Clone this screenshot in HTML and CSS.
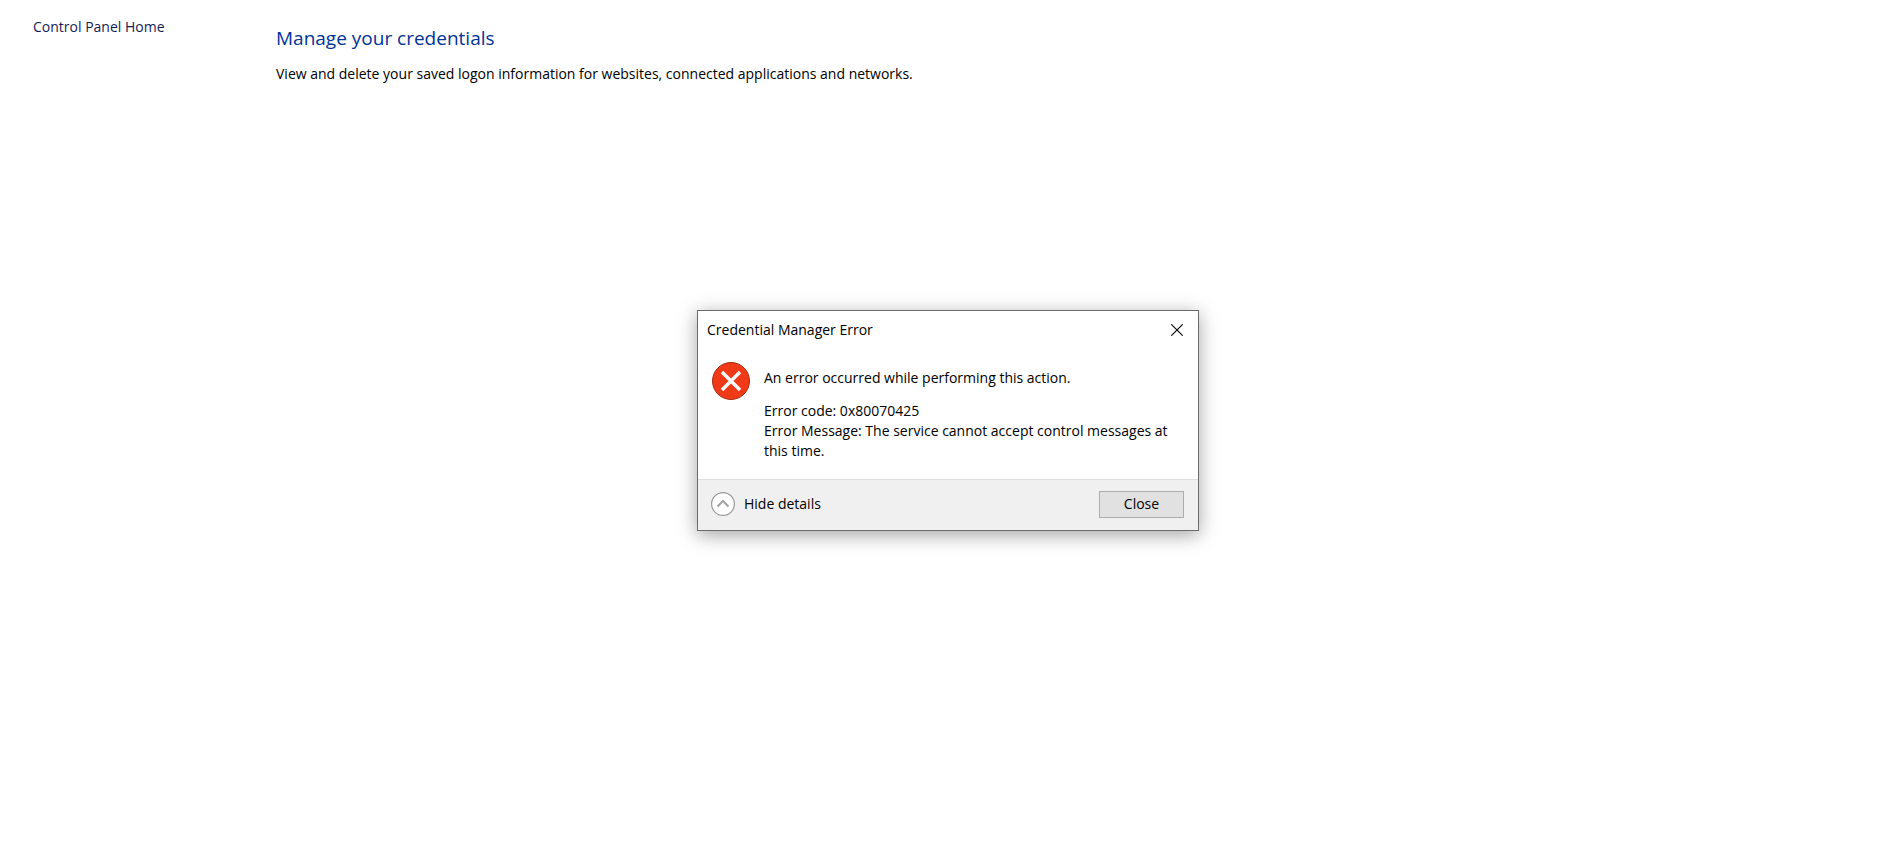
FILE: index.html
```html
<!DOCTYPE html>
<html lang="en">
<head>
<meta charset="utf-8">
<title>Credential Manager</title>
<meta name="viewport" content="width=device-width, initial-scale=1">
<link rel="stylesheet" href="styles.css">
</head>
<body>
<div class="page">
  <nav class="sidebar">
    <a href="#">Control Panel Home</a>
  </nav>
  <main class="content">
    <h1>Manage your credentials</h1>
    <p>View and delete your saved logon information for websites, connected applications and networks.</p>
  </main>
</div>

<div class="dialog" role="alertdialog" aria-labelledby="dialog-title">
  <div class="titlebar">
    <h2 id="dialog-title">Credential Manager Error</h2>
    <button class="x" type="button" aria-label="Close window">
      <svg width="12" height="12" viewBox="0 0 12 12"><path d="M0.3 0.3L11.7 11.7M11.7 0.3L0.3 11.7" stroke="#000" stroke-width="1.1"/></svg>
    </button>
  </div>
  <div class="message">
    <svg class="error-icon" width="38" height="38" viewBox="0 0 38 38">
      <circle cx="19" cy="19" r="18.5" fill="#f03a17" stroke="#a62a12"/>
      <path d="M10 10L28 28M28 10L10 28" stroke="#fff" stroke-width="3.4"/>
    </svg>
    <div class="text">
      <p>An error occurred while performing this action.</p>
      <p>Error code: 0x80070425<br>Error Message: The service cannot accept control messages at this time.</p>
    </div>
  </div>
  <div class="footer">
    <button class="details" type="button">
      <svg width="24" height="24" viewBox="0 0 24 24" fill="none">
        <circle cx="12" cy="12" r="11.4" fill="#fff" stroke="#999" stroke-width="1.2"/>
        <path d="M6.5 14.5L12 9L17.5 14.5" stroke="#a3a3a3" stroke-width="2"/>
      </svg>
      Hide details
    </button>
    <button class="close" type="button">Close</button>
  </div>
</div>
</body>
</html>
```

FILE: styles.css
```css
* {
  box-sizing: border-box;
}

body {
  margin: 0;
  background: white;
  color: black;
  font-family: "Segoe UI", "Open Sans", "Noto Sans", sans-serif;
  font-size: 14px;
  line-height: 20px;
}

h1, h2, p {
  margin: 0;
  font-weight: normal;
}

button {
  font: inherit;
  color: inherit;
  padding: 0;
}

svg {
  display: block;
}

/* Control panel page */
.page {
  display: flex;
}

.sidebar {
  width: 276px;
  padding: 17px 33px;
}
.sidebar a {
  color: #151c55;
  text-decoration: none;
}

.content {
  flex: 1;
  padding-top: 24px;
}
.content h1 {
  margin-bottom: 12px;
  color: #003399;
  font-size: 19px;
  line-height: 28px;
}

/* Error window */
.dialog {
  position: absolute;
  top: 310px;
  left: 697px;
  width: 502px;
  background: white;
  border: 1px solid #6b6b6b;
  box-shadow: 0 4px 18px rgba(0, 0, 0, .36);
}

.titlebar {
  display: flex;
  align-items: center;
  justify-content: space-between;
  height: 38px;
  padding-left: 9px;
}
.titlebar h2 {
  font-size: 14px;
}

.x {
  width: 42px;
  height: 36px;
  padding-left: 15px;
  background: none;
  border: 0;
}

.message {
  display: flex;
  gap: 14px;
  padding: 13px 20px 18px 14px;
}
.error-icon {
  flex: none;
}
.text {
  padding-top: 6px;
}
.text p + p {
  margin-top: 13px;
}

.footer {
  display: flex;
  align-items: center;
  justify-content: space-between;
  height: 51px;
  padding: 0 14px 2px 13px;
  background: #f0f0f0;
  border-top: 1px solid #dfdfdf;
}

.details {
  display: flex;
  align-items: center;
  gap: 9px;
  background: none;
  border: 0;
}

.close {
  width: 85px;
  height: 27px;
  background: #e1e1e1;
  border: 1px solid #adadad;
}
```
